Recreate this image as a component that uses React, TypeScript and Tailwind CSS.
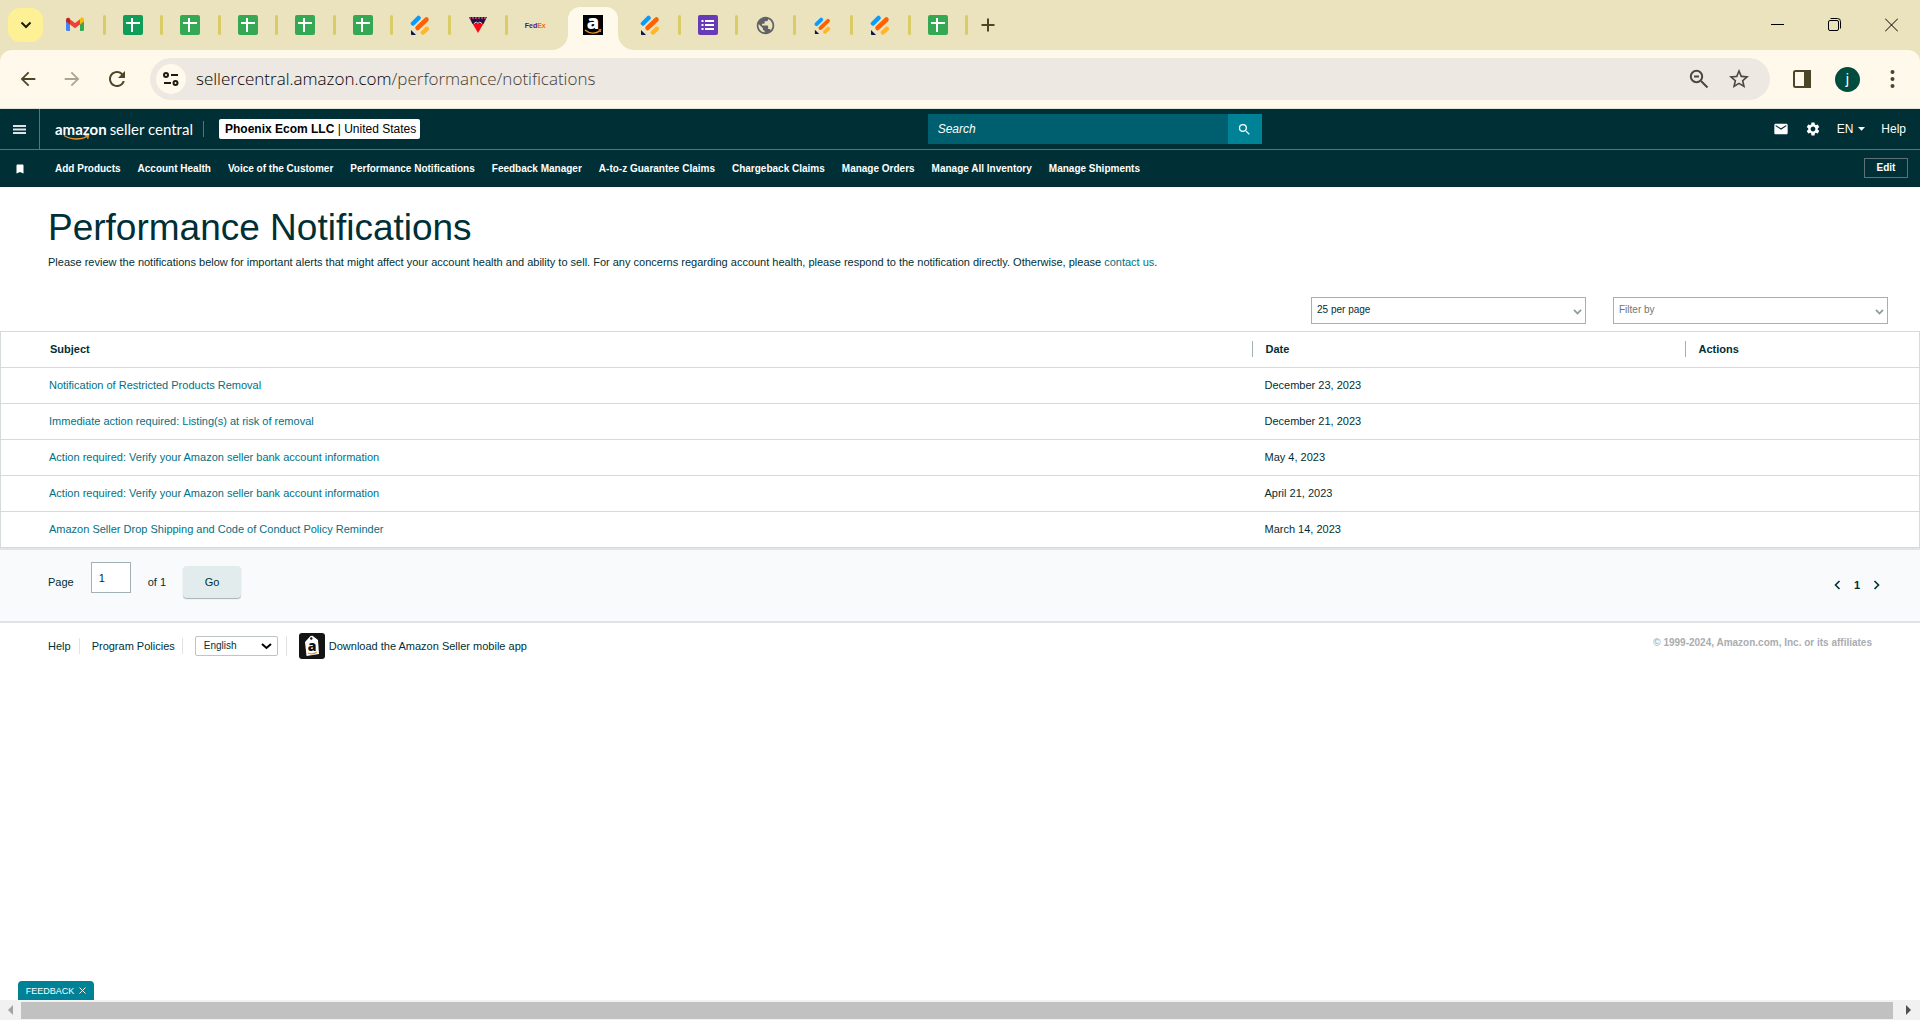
import type { ReactNode } from "react";
import { MdBookmark, MdEmail, MdSettings, MdPublic, MdStarOutline, MdSearch, MdArrowBack, MdArrowForward, MdRefresh } from "react-icons/md";

const NAV = [
  "Add Products",
  "Account Health",
  "Voice of the Customer",
  "Performance Notifications",
  "Feedback Manager",
  "A-to-z Guarantee Claims",
  "Chargeback Claims",
  "Manage Orders",
  "Manage All Inventory",
  "Manage Shipments",
];

const NOTIFICATIONS = [
  { subject: "Notification of Restricted Products Removal", date: "December 23, 2023" },
  { subject: "Immediate action required: Listing(s) at risk of removal", date: "December 21, 2023" },
  { subject: "Action required: Verify your Amazon seller bank account information", date: "May 4, 2023" },
  { subject: "Action required: Verify your Amazon seller bank account information", date: "April 21, 2023" },
  { subject: "Amazon Seller Drop Shipping and Code of Conduct Policy Reminder", date: "March 14, 2023" },
];

function GmailIcon() {
  return (
    <svg width="20" height="20" viewBox="0 0 20 20">
      <path d="M1 5v9.500a1.500 1.500 0 0 0 1.500 1.500H5V8z" fill="#4285f4" />
      <path d="M19 5v9.500a1.500 1.500 0 0 1-1.500 1.500H15V8z" fill="#34a853" />
      <path d="M15 4.500V9.500l4-3V4.800c0-2-2.200-2.800-3.500-1.700z" fill="#fbbc04" />
      <path d="M5 9.500V4.200l5 3.800 5-3.800v5.300L10 13.200z" fill="#ea4335" />
      <path d="M1 4.800v1.700l4 3V4.200L4.500 3.100C3.200 2.100 1 2.900 1 4.800z" fill="#c5221f" />
    </svg>
  );
}

function SheetIcon({ color }: { color: string }) {
  return (
    <svg width="20" height="20" viewBox="0 0 20 20">
      <rect width="20" height="20" rx="2" fill={color} />
      <path d="M3 8h14M9 3v14" stroke="#fff" strokeWidth="2" />
    </svg>
  );
}

function JotformIcon({ size = 20 }: { size?: number }) {
  return (
    <svg width={size} height={size} viewBox="0 0 20 20" strokeLinecap="round" strokeWidth="4.500">
      <path d="M3 8.500 8.500 3" stroke="#0a9bff" />
      <path d="M7.500 13 16.500 4.500" stroke="#ff6100" />
      <path d="M13 17.500 16.800 13.800" stroke="#ffb629" />
      <path d="M1 15v4.300c0 .4.300.7.700.7H6z" fill="#0a1551" />
    </svg>
  );
}

function TriangleIcon() {
  return (
    <svg width="20" height="20" viewBox="0 0 20 20">
      <path d="M1 2h18l-3.500 7h-11z" fill="#2a1240" />
      <path d="M1 3h18" stroke="#c9487c" strokeWidth="1.500" strokeDasharray="2 1" />
      <path d="M4.500 8.500h11L10 18z" fill="#fa0a14" />
      <path d="M6 8.500l2.500-1.500 1.500 1.500 1.500-1.500 2.500 1.500" stroke="#e8e0f4" fill="none" />
    </svg>
  );
}

function FedexIcon() {
  return (
    <span className="font-['Liberation_Sans'] text-[7px] font-bold leading-none text-[#4d148c]">
      Fed<span className="text-[#ff6600]">Ex</span>
    </span>
  );
}

function AmazonIcon() {
  return (
    <svg className="overflow-visible" width="20" height="20" viewBox="0 0 20 20">
      <rect width="20" height="20" fill="#000" />
      <text x="10" y="13.500" textAnchor="middle" fontFamily="Open Sans, sans-serif" fontWeight="800" fontSize="20" fill="#fff">a</text>
      <path d="M2 15c4.500 4 11 4 15 .6" stroke="#e8902a" strokeWidth="1.400" fill="none" />
      <path d="M15.500 14.800l2.500-.2-.6 2.400" stroke="#e8902a" strokeWidth="1" fill="none" />
    </svg>
  );
}

function FormsIcon() {
  return (
    <svg width="20" height="20" viewBox="0 0 20 20">
      <rect width="20" height="20" rx="2" fill="#673ab7" />
      <path d="M7 6h9M7 10h9M7 14h9" stroke="#fff" strokeWidth="2" />
      <path d="M3.500 6h2M3.500 10h2M3.500 14h2" stroke="#fff" strokeWidth="2" />
    </svg>
  );
}

const sheet = <SheetIcon color="#34a853" />;

const TABS: { name: string; icon: ReactNode; active?: boolean; divider?: boolean }[] = [
  { name: "Gmail", icon: <GmailIcon />, divider: true },
  { name: "Sheet 1", icon: <SheetIcon color="#109d58" />, divider: true },
  { name: "Sheet 2", icon: sheet, divider: true },
  { name: "Sheet 3", icon: sheet, divider: true },
  { name: "Sheet 4", icon: sheet, divider: true },
  { name: "Sheet 5", icon: sheet, divider: true },
  { name: "Jotform", icon: <JotformIcon />, divider: true },
  { name: "Supplier", icon: <TriangleIcon />, divider: true },
  { name: "FedEx", icon: <FedexIcon /> },
  { name: "Seller Central", icon: <AmazonIcon />, active: true },
  { name: "Jotform", icon: <JotformIcon />, divider: true },
  { name: "Forms", icon: <FormsIcon />, divider: true },
  { name: "Web page", icon: <MdPublic size={21} color="#5f6368" />, divider: true },
  { name: "Jotform", icon: <JotformIcon size={17} />, divider: true },
  { name: "Jotform", icon: <JotformIcon />, divider: true },
  { name: "Sheet 6", icon: sheet, divider: true },
];

function TabStrip() {
  return (
    <div className="flex h-[50px] items-center bg-[#ebe3bd]">
      <button aria-label="Search tabs" className="ml-2 mr-[5px] flex h-[34px] w-[35px] items-center justify-center rounded-xl bg-[#fef095]">
        <svg width="12" height="8" viewBox="0 0 12 8" fill="none" stroke="#1d1b10" strokeWidth="2">
          <path d="M1.500 1.500 6 6l4.500-4.500" />
        </svg>
      </button>
      <div className="flex h-full w-[920px]">
        {TABS.map((t, i) => (
          <div key={i} className="flex h-full flex-1 items-center">
            <button aria-label={t.name} className="relative flex h-full flex-1 items-center justify-center">
              {t.active && <ActiveTabShape />}
              <span className="relative flex">{t.icon}</span>
            </button>
            <span className={t.divider ? "h-5 w-[3px] rounded-full bg-[#d9cb66]" : "h-5 w-[3px]"} />
          </div>
        ))}
      </div>
      <button aria-label="New tab" className="ml-3 flex size-4 items-center justify-center">
        <svg width="14" height="14" viewBox="0 0 14 14" stroke="#4b4628" strokeWidth="2">
          <path d="M7 .5v13M.5 7h13" />
        </svg>
      </button>
      <div className="ml-auto flex items-center gap-11 pr-[22px]">
        <button aria-label="Minimize" className="flex">
          <svg width="13" height="14" viewBox="0 0 13 14" stroke="#000"><path d="M0 6.500h13" /></svg>
        </button>
        <button aria-label="Restore" className="flex">
          <svg width="13" height="14" viewBox="0 0 13 14" fill="none" stroke="#000">
            <rect x=".5" y="2.500" width="10" height="10" rx="1.500" />
            <path d="M2.500.5h7a3 3 0 0 1 3 3v7" />
          </svg>
        </button>
        <button aria-label="Close" className="flex">
          <svg width="13" height="14" viewBox="0 0 13 14" stroke="#000"><path d="M0 .5 13 13.500M13 .5 0 13.500" /></svg>
        </button>
      </div>
    </div>
  );
}

function ActiveTabShape() {
  return (
    <span className="absolute bottom-0 left-1/2 h-[43px] w-[50px] -translate-x-1/2 rounded-t-xl bg-[#fff9eb]">
      <span className="absolute bottom-0 right-full size-4 overflow-hidden">
        <span className="block size-4 rounded-br-2xl shadow-[8px_8px_0_8px_#fff9eb]" />
      </span>
      <span className="absolute bottom-0 left-full size-4 overflow-hidden">
        <span className="block size-4 rounded-bl-2xl shadow-[-8px_8px_0_8px_#fff9eb]" />
      </span>
    </span>
  );
}

function Toolbar() {
  return (
    <div className="bg-[#ebe3bd]">
      <div className="flex h-[59px] items-center rounded-t-xl border-b border-[#dfe2d4] bg-[#fff9eb] pl-4 pr-[25px] text-[#4b4628]">
        <button aria-label="Back" className="p-px"><MdArrowBack size={22} /></button>
        <button aria-label="Forward" className="ml-5 p-px text-[#aaa691]"><MdArrowForward size={22} /></button>
        <button aria-label="Reload" className="ml-5 p-px"><MdRefresh size={24} /></button>
        <div className="ml-5 flex h-[42px] flex-1 items-center rounded-full bg-[#ede8e1] pl-1.5 pr-[19px]">
          <button aria-label="View site information" className="flex size-[30px] items-center justify-center rounded-full bg-[#fff9eb]">
            <svg width="16" height="14" viewBox="0 0 16 14" fill="none" stroke="#1d1b10" strokeWidth="2">
              <circle cx="3" cy="3" r="2" />
              <path d="M8 3h7M1 11h7" />
              <circle cx="12.500" cy="11" r="2" />
            </svg>
          </button>
          <div className="ml-2.5 flex-1 font-['Open_Sans',sans-serif] text-[17px] font-light leading-6 text-[#3f3c34]">
            <span className="text-black">sellercentral.amazon.com</span>/performance/notifications
          </div>
          <button aria-label="Zoom" className="flex">
            <svg width="20" height="20" viewBox="0 0 20 20" fill="none" stroke="#4b483e" strokeWidth="2">
              <circle cx="7.500" cy="7.500" r="5.700" />
              <path d="M12 12l6.500 6.500M5 7.500h5" />
            </svg>
          </button>
          <button aria-label="Bookmark this tab" className="ml-[18px] text-[#4b483e]"><MdStarOutline size={24} /></button>
        </div>
        <button aria-label="Side panel" className="ml-[23px] flex">
          <svg width="18" height="18" viewBox="0 0 18 18" fill="none" stroke="#4b4628" strokeWidth="2">
            <rect x="1" y="1" width="16" height="16" rx="1.500" />
            <path d="M12 1h5v16h-5z" fill="#4b4628" />
          </svg>
        </button>
        <button aria-label="Profile" className="ml-6 flex size-[25px] items-center justify-center rounded-full bg-[#004d40] font-['Roboto',sans-serif] text-sm leading-none text-white">j</button>
        <button aria-label="Chrome menu" className="ml-[30px] flex">
          <svg width="5" height="18" viewBox="0 0 5 18" fill="#4b4628">
            <circle cx="2.500" cy="2" r="2" />
            <circle cx="2.500" cy="9" r="2" />
            <circle cx="2.500" cy="16" r="2" />
          </svg>
        </button>
      </div>
    </div>
  );
}

function SellerHeader() {
  return (
    <header className="bg-[#002f36] text-white">
      <div className="flex h-[41px] items-center border-b border-[#5c7276]">
        <button aria-label="Menu" className="flex h-full w-10 items-center justify-center border-r border-[#5c7276]">
          <svg width="13" height="9" viewBox="0 0 13 9" stroke="#dfe5e6" strokeWidth="2">
            <path d="M0 1h13M0 4.500h13M0 8h13" />
          </svg>
        </button>
        <a href="#" className="relative ml-[15px] flex w-[134px] items-baseline gap-[3px] whitespace-nowrap font-['Lato',sans-serif] leading-5">
          <span className="text-[15px] font-bold">amazon</span>
          <span className="text-[15px]">seller central</span>
          <svg className="absolute left-2 top-4" width="28" height="7" viewBox="0 0 28 7" fill="none" stroke="#f0932b" strokeWidth="1.300">
            <path d="M1 .5c7 4.500 17 4.500 23.500 1M21.500 .6l4-.3-.8 3.600" />
          </svg>
        </a>
        <span className="ml-3.5 h-4 w-px bg-[#5c7276]" />
        <button className="ml-[15px] h-5 rounded-[2px] bg-white pl-1.5 pr-1 text-xs leading-5 text-black">
          <b>Phoenix Ecom LLC</b> | United States
        </button>
        <form className="ml-auto mr-[511px] flex h-[30px] w-[334px]" onSubmit={e => e.preventDefault()}>
          <input aria-label="Search" placeholder="Search" className="min-w-0 flex-1 bg-[#005f6e] px-2.5 text-xs italic placeholder:text-white" />
          <button aria-label="Submit search" className="flex w-[34px] items-center justify-center bg-[#008296]"><MdSearch size={15} /></button>
        </form>
        <div className="flex items-center pr-3.5 text-xs leading-4">
          <a href="#" aria-label="Messages"><MdEmail size={16} /></a>
          <a href="#" aria-label="Settings" className="ml-4"><MdSettings size={16} /></a>
          <button className="ml-4 flex items-center gap-[5px]">
            EN
            <svg width="7" height="4" viewBox="0 0 7 4" fill="#fff"><path d="M0 0h7L3.500 3.700z" /></svg>
          </button>
          <a href="#" className="ml-4">Help</a>
        </div>
      </div>
      <nav className="flex h-[37px] items-center pr-3">
        <span className="flex w-10 justify-center"><MdBookmark size={12} /></span>
        <div className="ml-[15px] flex gap-[17px] whitespace-nowrap text-[10px] font-bold leading-4">
          {NAV.map(n => <a key={n} href="#">{n}</a>)}
        </div>
        <button className="mb-0.5 ml-auto h-5 w-11 border border-[#5c7276] text-[10px] font-bold leading-4">Edit</button>
      </nav>
    </header>
  );
}

function Dropdown({ label, value, muted }: { label: string; value: string; muted?: boolean }) {
  return (
    <div className="relative w-[275px]">
      <select
        aria-label={label}
        className={`block h-[27px] w-full appearance-none border border-[#a2b1b4] bg-white px-[5px] pb-0.5 text-[10px] leading-4 ${muted ? "text-[#6c7778]" : "text-[#002f36]"}`}
      >
        <option>{value}</option>
      </select>
      <svg className="pointer-events-none absolute right-1 top-3" width="9" height="6" viewBox="0 0 9 6" fill="none" stroke="#8d9c9f" strokeWidth="1.800">
        <path d="M1 .8 4.500 4.500 8 .8" />
      </svg>
    </div>
  );
}

function NotificationsTable() {
  return (
    <table className="w-full table-fixed border-collapse border border-[#d5dbdb] text-left text-[11px] leading-4">
      <thead>
        <tr className="h-9">
          <th className="pb-0.5 pl-[49px]">Subject</th>
          <th className="w-[433px] p-0 pb-0.5">
            <span className="block border-l border-[#a2b1b4] pl-[13px]">Date</span>
          </th>
          <th className="w-[235px] p-0 pb-0.5">
            <span className="block border-l border-[#a2b1b4] pl-[13px]">Actions</span>
          </th>
        </tr>
      </thead>
      <tbody>
        {NOTIFICATIONS.map((n, i) => (
          <tr key={i} className="h-9 border-t border-[#d5dbdb]">
            <td className="pb-0.5 pl-12"><a href="#" className="text-[#007185]">{n.subject}</a></td>
            <td className="pb-0.5 pl-[13px]">{n.date}</td>
            <td />
          </tr>
        ))}
      </tbody>
    </table>
  );
}

function Pagination() {
  return (
    <div className="flex h-[75px] items-center justify-between border-y-2 border-[#e0e3e7] bg-[#f8fafc] px-12 pb-1 text-[11px] leading-4">
      <form className="mb-1 flex items-center" onSubmit={e => e.preventDefault()}>
        <label htmlFor="page">Page</label>
        <input id="page" defaultValue="1" className="mb-2 ml-[17px] h-[31px] w-10 border border-[#a2b1b4] bg-white px-[7px]" />
        <span className="ml-[17px]">of 1</span>
        <button className="ml-[17px] h-8 w-[58px] rounded-sm bg-[#e3eced] shadow-[0_1px_1px_#a8b0b2]">Go</button>
      </form>
      <div className="mr-[-8px] flex items-center gap-[13px] pt-0.5">
        <button aria-label="Previous page">
          <svg width="7" height="10" viewBox="0 0 7 10" fill="none" stroke="#002f36" strokeWidth="1.600"><path d="M5.500 1 1.500 5l4 4" /></svg>
        </button>
        <b>1</b>
        <button aria-label="Next page">
          <svg width="7" height="10" viewBox="0 0 7 10" fill="none" stroke="#002f36" strokeWidth="1.600"><path d="M1.500 1l4 4-4 4" /></svg>
        </button>
      </div>
    </div>
  );
}

function Footer() {
  return (
    <footer className="flex items-center px-12 pt-2.5 text-[11px] leading-4">
      <a href="#">Help</a>
      <span className="ml-2 h-4 w-px bg-[#dfe3e6]" />
      <a href="#" className="ml-3">Program Policies</a>
      <span className="ml-[7px] h-4 w-px bg-[#dfe3e6]" />
      <div className="relative ml-3">
        <select aria-label="Language" className="block h-5 w-[83px] appearance-none rounded-[2px] border border-[#bfc4c6] bg-white pl-2 text-[10px] leading-4">
          <option>English</option>
        </select>
        <svg className="pointer-events-none absolute right-1.5 top-[7px]" width="11" height="7" viewBox="0 0 11 7" fill="none" stroke="#000" strokeWidth="2">
          <path d="M1 1l4.500 4L10 1" />
        </svg>
      </div>
      <span className="ml-2 h-5 w-px bg-[#dfe3e6]" />
      <a href="#" className="ml-3 flex items-center gap-1">
        <svg width="26" height="26" viewBox="0 0 26 26">
          <rect width="26" height="26" rx="3" fill="#141414" />
          <path d="M6 9l5.500-6 2-.3L19 7l1 14-12.500 2z" fill="#fff" />
          <circle cx="12.300" cy="5.500" r="1.200" fill="#141414" />
          <text x="13" y="17.500" textAnchor="middle" fontFamily="Open Sans, sans-serif" fontWeight="800" fontSize="14" fill="#111">a</text>
          <path d="M9 20c3 1.600 6 1.200 9-.9" stroke="#f0932b" strokeWidth="1.200" fill="none" />
        </svg>
        Download the Amazon Seller mobile app
      </a>
      <span className="ml-auto pb-1.5 text-[10px] font-bold text-[#a9adaf]">© 1999-2024, Amazon.com, Inc. or its affiliates</span>
    </footer>
  );
}

function ScrollBar() {
  return (
    <div className="flex h-5 items-center justify-between bg-[#f1f1f1]">
      <span className="flex w-[21px] justify-center">
        <svg width="5" height="10" viewBox="0 0 5 10" fill="#a3a3a3"><path d="M5 0v10L0 5z" /></svg>
      </span>
      <span className="h-[17px] flex-1 bg-[#c1c1c1]" />
      <span className="flex w-[27px] justify-center pl-1">
        <svg width="5" height="10" viewBox="0 0 5 10" fill="#505050"><path d="M0 0v10l5-5z" /></svg>
      </span>
    </div>
  );
}

export default function App() {
  return (
    <div className="flex min-h-screen flex-col bg-white font-['Liberation_Sans',Arial,sans-serif] text-[#002f36]">
      <TabStrip />
      <Toolbar />
      <SellerHeader />
      <main className="flex-1">
        <div className="px-12 pt-[19px]">
          <h1 className="text-[37px] leading-11">Performance Notifications</h1>
          <p className="mt-1 text-[11px] leading-4">
            Please review the notifications below for important alerts that might affect your account health and ability to sell. For any concerns regarding account health, please respond to the notification directly. Otherwise, please{" "}
            <a href="#" className="text-[#007185]">contact us</a>.
          </p>
        </div>
        <div className="flex justify-end gap-[27px] pb-[7px] pr-8 pt-[27px]">
          <Dropdown label="Results per page" value="25 per page" />
          <Dropdown label="Filter" value="Filter by" muted />
        </div>
        <NotificationsTable />
        <Pagination />
        <Footer />
      </main>
      <div className="flex pl-[18px]">
        <button className="flex h-[19px] w-[76px] items-center justify-center gap-[5px] rounded-t bg-[#008296] text-[9px] leading-4 text-white">
          FEEDBACK
          <svg width="7" height="7" viewBox="0 0 7 7" stroke="#fff"><path d="M.5.5l6 6M6.500.5l-6 6" /></svg>
        </button>
      </div>
      <ScrollBar />
    </div>
  );
}
